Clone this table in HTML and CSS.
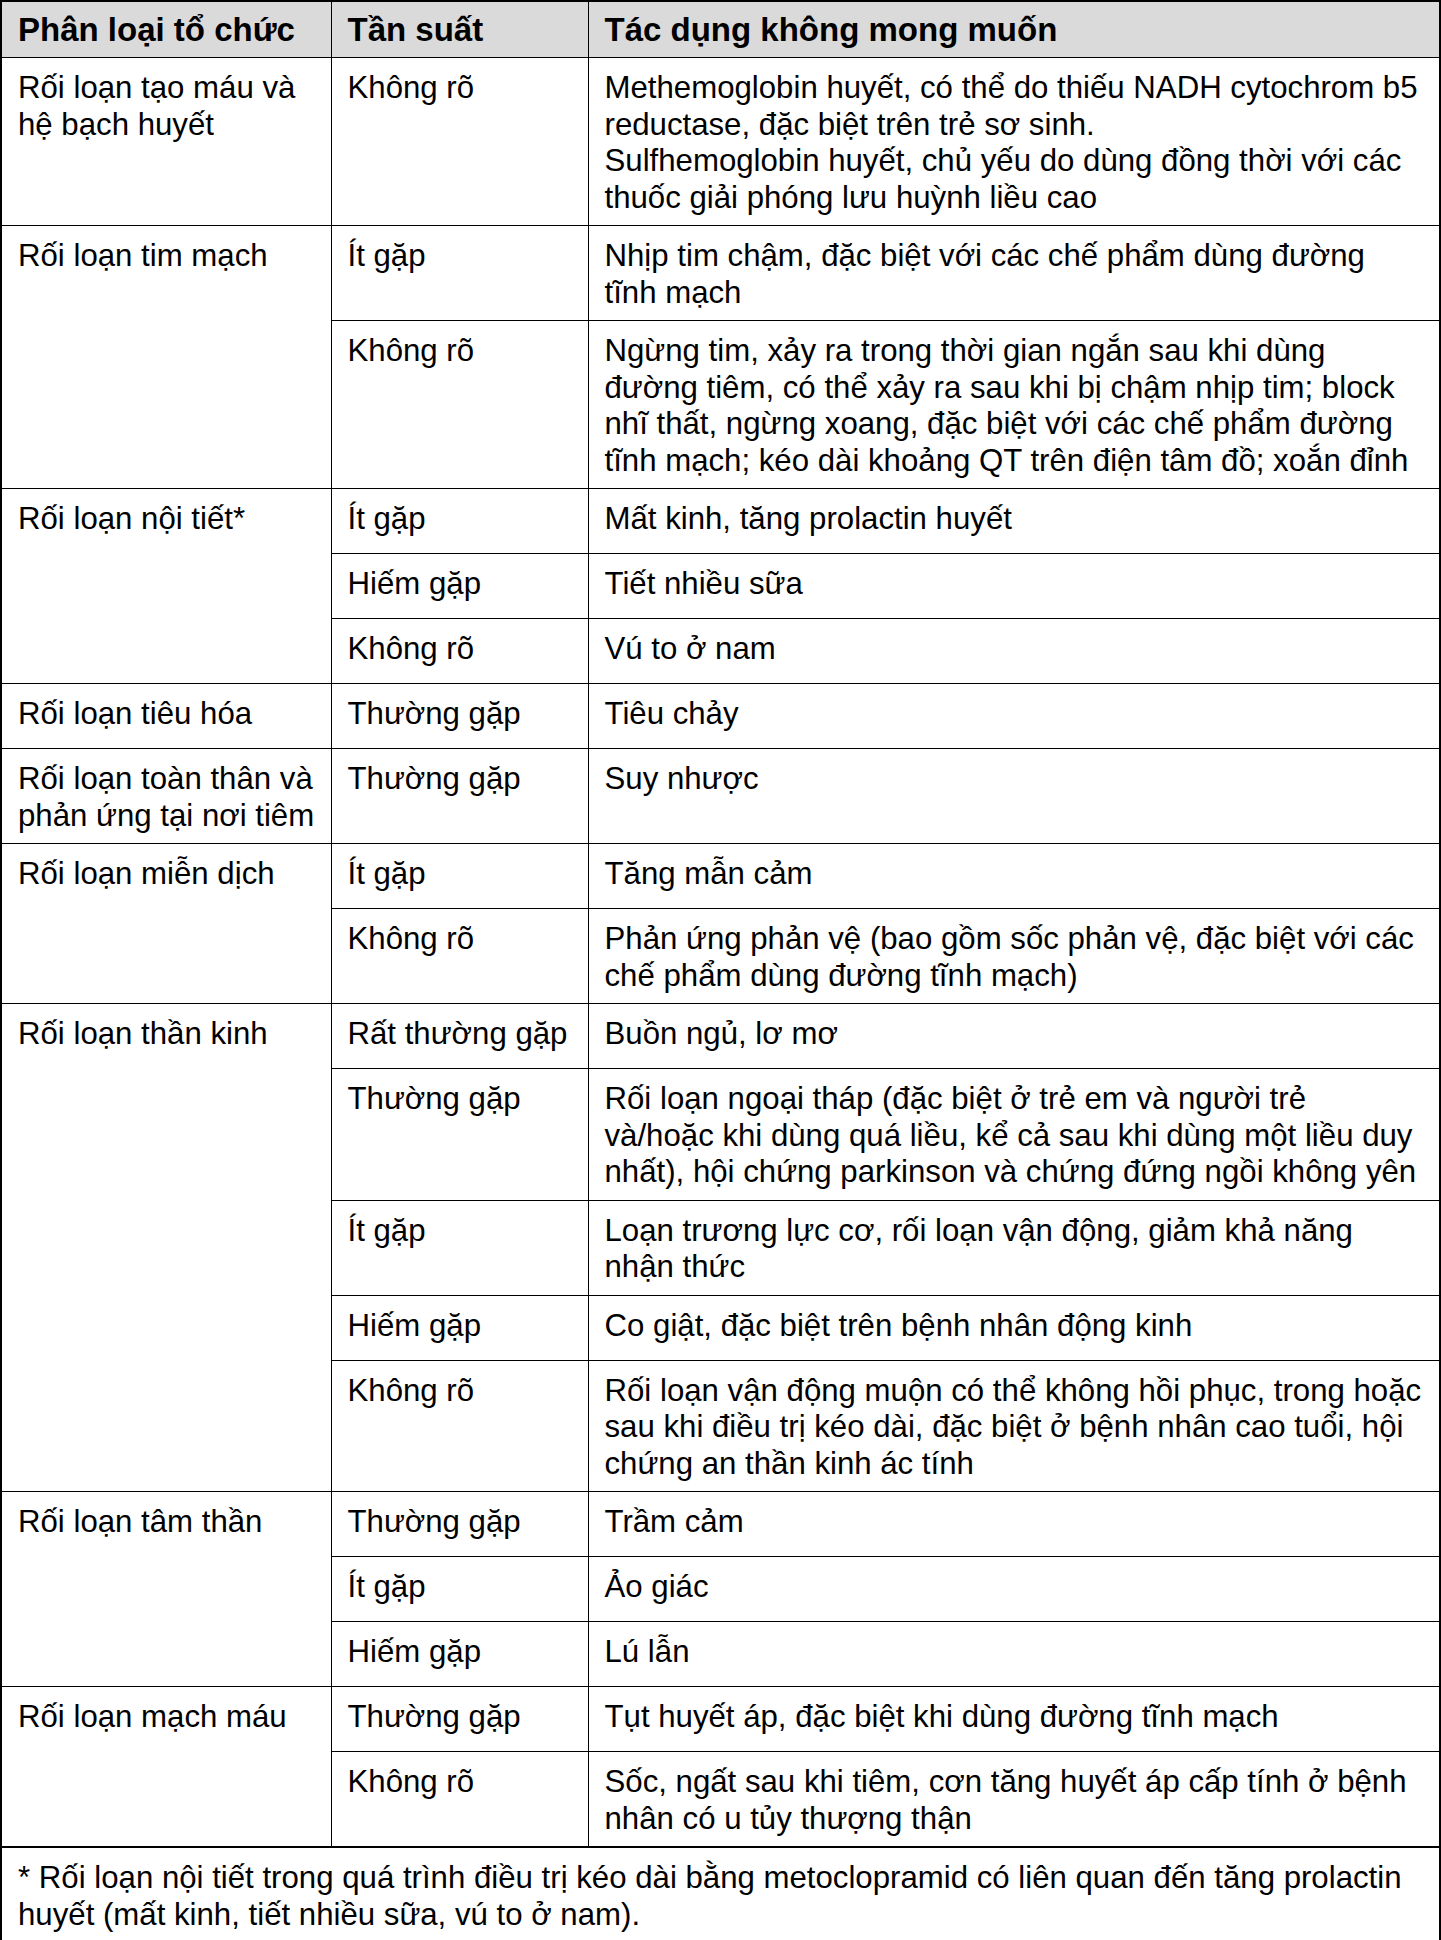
FILE: index.html
```html
<!DOCTYPE html>
<html lang="vi">
<head>
<meta charset="utf-8">
<title>Tác dụng không mong muốn</title>
<link rel="stylesheet" href="styles.css">
</head>
<body>
<table class="adr">
  <colgroup>
    <col class="c-org">
    <col class="c-freq">
    <col class="c-effect">
  </colgroup>
  <thead>
    <tr>
      <th>Phân loại tổ chức</th>
      <th>Tần suất</th>
      <th>Tác dụng không mong muốn</th>
    </tr>
  </thead>
  <tbody>
    <tr>
      <td>Rối loạn tạo máu và hệ bạch huyết</td>
      <td>Không rõ</td>
      <td class="effect">Methemoglobin huyết, có thể do thiếu NADH cytochrom b5<br>reductase, đặc biệt trên trẻ sơ sinh.<br>Sulfhemoglobin huyết, chủ yếu do dùng đồng thời với các<br>thuốc giải phóng lưu huỳnh liều cao</td>
    </tr>
    <tr>
      <td rowspan="2">Rối loạn tim mạch</td>
      <td>Ít gặp</td>
      <td class="effect">Nhịp tim chậm, đặc biệt với các chế phẩm dùng đường<br>tĩnh mạch</td>
    </tr>
    <tr>
      <td>Không rõ</td>
      <td class="effect">Ngừng tim, xảy ra trong thời gian ngắn sau khi dùng<br>đường tiêm, có thể xảy ra sau khi bị chậm nhịp tim; block<br>nhĩ thất, ngừng xoang, đặc biệt với các chế phẩm đường<br>tĩnh mạch; kéo dài khoảng QT trên điện tâm đồ; xoắn đỉnh</td>
    </tr>
    <tr>
      <td rowspan="3">Rối loạn nội tiết*</td>
      <td>Ít gặp</td>
      <td class="effect">Mất kinh, tăng prolactin huyết</td>
    </tr>
    <tr>
      <td>Hiếm gặp</td>
      <td class="effect">Tiết nhiều sữa</td>
    </tr>
    <tr>
      <td>Không rõ</td>
      <td class="effect">Vú to ở nam</td>
    </tr>
    <tr>
      <td>Rối loạn tiêu hóa</td>
      <td>Thường gặp</td>
      <td class="effect">Tiêu chảy</td>
    </tr>
    <tr>
      <td>Rối loạn toàn thân và phản ứng tại nơi tiêm</td>
      <td>Thường gặp</td>
      <td class="effect">Suy nhược</td>
    </tr>
    <tr>
      <td rowspan="2">Rối loạn miễn dịch</td>
      <td>Ít gặp</td>
      <td class="effect">Tăng mẫn cảm</td>
    </tr>
    <tr>
      <td>Không rõ</td>
      <td class="effect">Phản ứng phản vệ (bao gồm sốc phản vệ, đặc biệt với các<br>chế phẩm dùng đường tĩnh mạch)</td>
    </tr>
    <tr>
      <td rowspan="5">Rối loạn thần kinh</td>
      <td>Rất thường gặp</td>
      <td class="effect">Buồn ngủ, lơ mơ</td>
    </tr>
    <tr>
      <td>Thường gặp</td>
      <td class="effect">Rối loạn ngoại tháp (đặc biệt ở trẻ em và người trẻ<br>và/hoặc khi dùng quá liều, kể cả sau khi dùng một liều duy<br>nhất), hội chứng parkinson và chứng đứng ngồi không yên</td>
    </tr>
    <tr>
      <td>Ít gặp</td>
      <td class="effect">Loạn trương lực cơ, rối loạn vận động, giảm khả năng<br>nhận thức</td>
    </tr>
    <tr>
      <td>Hiếm gặp</td>
      <td class="effect">Co giật, đặc biệt trên bệnh nhân động kinh</td>
    </tr>
    <tr>
      <td>Không rõ</td>
      <td class="effect">Rối loạn vận động muộn có thể không hồi phục, trong hoặc<br>sau khi điều trị kéo dài, đặc biệt ở bệnh nhân cao tuổi, hội<br>chứng an thần kinh ác tính</td>
    </tr>
    <tr>
      <td rowspan="3">Rối loạn tâm thần</td>
      <td>Thường gặp</td>
      <td class="effect">Trầm cảm</td>
    </tr>
    <tr>
      <td>Ít gặp</td>
      <td class="effect">Ảo giác</td>
    </tr>
    <tr>
      <td>Hiếm gặp</td>
      <td class="effect">Lú lẫn</td>
    </tr>
    <tr>
      <td rowspan="2">Rối loạn mạch máu</td>
      <td>Thường gặp</td>
      <td class="effect">Tụt huyết áp, đặc biệt khi dùng đường tĩnh mạch</td>
    </tr>
    <tr>
      <td>Không rõ</td>
      <td class="effect">Sốc, ngất sau khi tiêm, cơn tăng huyết áp cấp tính ở bệnh<br>nhân có u tủy thượng thận</td>
    </tr>
  </tbody>
  <tfoot>
    <tr>
      <td colspan="3" class="note">* Rối loạn nội tiết trong quá trình điều trị kéo dài bằng metoclopramid có liên quan đến tăng prolactin<br>huyết (mất kinh, tiết nhiều sữa, vú to ở nam).</td>
    </tr>
  </tfoot>
</table>
</body>
</html>
```

FILE: styles.css
```css
html, body {
  margin: 0;
  padding: 0;
  background: #ffffff;
}

body {
  font-family: "Liberation Sans", Arial, sans-serif;
  color: #000;
}

.adr {
  width: 1441px;
  border-collapse: collapse;
  table-layout: fixed;
  border: 2px solid #000;
  font-size: 31.2px;
  line-height: 36.5px;
}

.c-org { width: 330px; }
.c-freq { width: 257px; }
.c-effect { width: auto; }

.adr tbody tr {
  height: 65px;
}

.adr th,
.adr td {
  border: 1px solid #000;
  text-align: left;
  vertical-align: top;
  padding: 12px 10px 9px 16px;
}

.adr .effect,
.adr .note {
  white-space: nowrap;
}

.adr th {
  background: #dadada;
  font-weight: bold;
  font-size: 33px;
  line-height: 38px;
  padding: 9px 16px 8px 16px;
}

.adr tfoot td {
  border-top: 2px solid #000;
}
```
